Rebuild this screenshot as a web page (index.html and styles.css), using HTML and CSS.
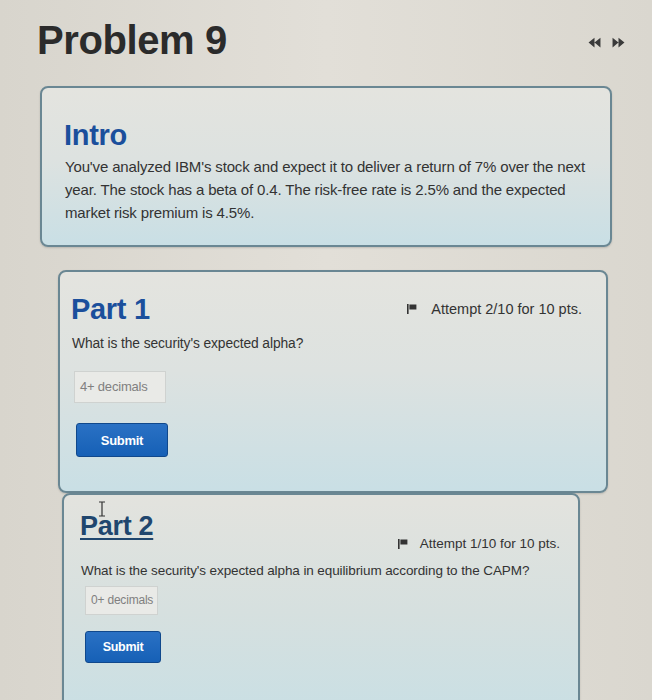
FILE: index.html
```html
<!DOCTYPE html>
<html>
<head>
<meta charset="utf-8">
<link rel="stylesheet" href="styles.css">
</head>
<body>
<div class="page">
  <header class="top">
    <h1 class="title">Problem 9</h1>
    <nav class="pager">
      <svg class="chev" viewBox="0 0 12 10" width="13" height="11"><path d="M6 0.5 L0.5 5 L6 9.5 Z M11.5 0.5 L6 5 L11.5 9.5 Z" fill="#3a3a3a"/></svg>
      <svg class="chev" viewBox="0 0 12 10" width="13" height="11"><path d="M0.5 0.5 L6 5 L0.5 9.5 Z M6 0.5 L11.5 5 L6 9.5 Z" fill="#3a3a3a"/></svg>
    </nav>
  </header>

  <section class="card intro">
    <h2 class="heading">Intro</h2>
    <p class="text">You've analyzed IBM's stock and expect it to deliver a return of 7% over the next year. The stock has a beta of 0.4. The risk-free rate is 2.5% and the expected market risk premium is 4.5%.</p>
  </section>

  <section class="card part part1">
    <div class="part-head">
      <h2 class="heading">Part 1</h2>
      <div class="attempt">
        <svg class="flag" viewBox="0 0 10 10" width="10" height="10"><rect x="0" y="0" width="1.6" height="10" fill="#333"/><rect x="2.4" y="0.5" width="7" height="5" fill="#333"/></svg>
        <span>Attempt 2/10 for 10 pts.</span>
      </div>
    </div>
    <p class="question">What is the security's expected alpha?</p>
    <div class="answer">4+ decimals</div>
    <button class="submit">Submit</button>
  </section>

  <section class="card part part2">
    <div class="part-head">
      <h2 class="heading link">Part 2</h2>
      <div class="attempt">
        <svg class="flag" viewBox="0 0 10 10" width="10" height="10"><rect x="0" y="0" width="1.6" height="10" fill="#333"/><rect x="2.4" y="0.5" width="7" height="5" fill="#333"/></svg>
        <span>Attempt 1/10 for 10 pts.</span>
      </div>
    </div>
    <p class="question">What is the security's expected alpha in equilibrium according to the CAPM?</p>
    <div class="answer small">0+ decimals</div>
    <button class="submit small">Submit</button>
    <svg class="ibeam" viewBox="0 0 8 16" width="8" height="16"><path d="M1 1 H7 M4 1 V15 M1 15 H7" stroke="#333" stroke-width="1.2" fill="none"/></svg>
  </section>
</div>
</body>
</html>
```

FILE: styles.css
```css
html, body {
  margin: 0;
  padding: 0;
  height: 100%;
  overflow: hidden;
}
body {
  background: linear-gradient(90deg, #d8d5cd 0%, #e2dfd8 50%, #dad7cf 100%);
  font-family: "Liberation Sans", Arial, sans-serif;
  color: #333;
}
.page {
  width: 652px;
  height: 700px;
  overflow: hidden;
}
.top {
  display: flex;
  justify-content: space-between;
  align-items: center;
  padding: 15px 27px 0 37px;
  height: 50px;
}
.title {
  margin: 0;
  font-size: 40px;
  font-weight: bold;
  color: #2b2b2b;
  letter-spacing: -0.4px;
}
.pager {
  display: flex;
  gap: 11px;
  padding-top: 4px;
}
.chev { display: block; }
.card {
  position: relative;
  border: 2px solid #6a8793;
  border-radius: 8px;
  background: linear-gradient(180deg, #e4e4df 0%, #dde2e0 45%, #c9dfe5 100%);
  box-shadow: 0 1px 2px rgba(0,0,0,0.15);
  box-sizing: border-box;
}
.intro {
  margin: 21px 0 0 40px;
  width: 572px;
  height: 161px;
  padding: 30px 18px 0 22px;
}
.heading {
  margin: 0;
  font-size: 29px;
  font-weight: bold;
  color: #1b4f9c;
  letter-spacing: -0.3px;
  line-height: 34px;
}
.text {
  margin: 3px 0 0 1px;
  font-size: 15px;
  line-height: 23px;
  color: #333;
  letter-spacing: -0.15px;
}
.part1 {
  margin: 23px 0 0 58px;
  width: 550px;
  height: 223px;
  padding: 20px 20px 0 11px;
}
.part-head {
  display: flex;
  justify-content: space-between;
  align-items: center;
}
.attempt {
  display: flex;
  align-items: center;
  gap: 14px;
  font-size: 14.5px;
  color: #333;
  padding-right: 4px;
}
.flag { display: block; }
.question {
  margin: 10px 0 0 1px;
  font-size: 13.8px;
  color: #333;
  letter-spacing: -0.1px;
}
.answer {
  margin: 20px 0 0 3px;
  width: 92px;
  height: 32px;
  box-sizing: border-box;
  border: 1px solid #cfd2d0;
  background: #e9eae7;
  color: #808080;
  font-size: 13px;
  line-height: 30px;
  padding-left: 5px;
  letter-spacing: -0.2px;
}
.submit {
  display: block;
  margin: 20px 0 0 5px;
  width: 92px;
  height: 34px;
  border: 1px solid #10488c;
  border-radius: 3px;
  background: linear-gradient(180deg, #2a71c4 0%, #1660b6 100%);
  color: #fff;
  font-family: "Liberation Sans", Arial, sans-serif;
  font-size: 13px;
  font-weight: bold;
  letter-spacing: -0.3px;
  padding: 0;
}
.part2 {
  margin: 0 0 0 62px;
  width: 518px;
  height: 240px;
  padding: 16px 18px 0 16px;
  background: linear-gradient(180deg, #e3e3de 0%, #d6e0df 50%, #c7dfe5 100%);
}
.part2 .part-head {
  align-items: flex-end;
}
.part2 .attempt {
  font-size: 13.5px;
  gap: 12px;
  padding-right: 0;
  margin-bottom: -10px;
}
.part2 .heading {
  font-size: 27px;
  line-height: 30px;
  color: #20466e;
}
.link {
  text-decoration: underline;
  text-decoration-thickness: 2px;
  text-underline-offset: 3px;
}
.part2 .question {
  margin-top: 22px;
  font-size: 13.5px;
}
.answer.small {
  margin-top: 8px;
  width: 73px;
  height: 29px;
  font-size: 12px;
  line-height: 27px;
  margin-left: 5px;
}
.submit.small {
  width: 76px;
  height: 32px;
  margin-top: 16px;
  font-size: 12.5px;
}
.ibeam {
  position: absolute;
  left: 34px;
  top: 6px;
}
```
